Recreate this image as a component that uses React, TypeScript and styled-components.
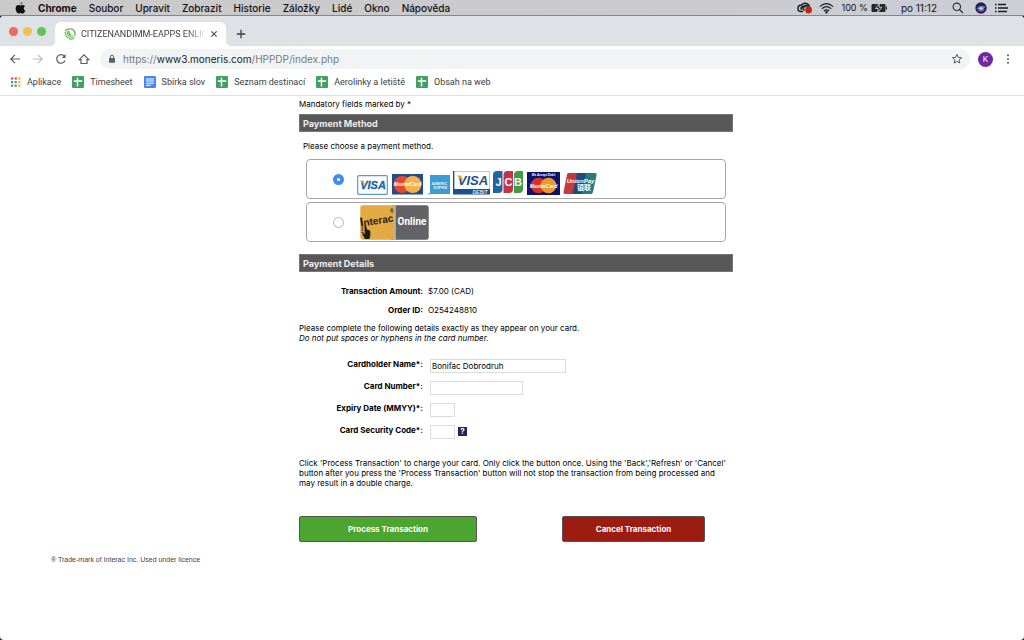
import React from "react";
import styled, { createGlobalStyle } from "styled-components";

const ui = `Inter, Roboto, sans-serif`;
const narrow = `Roboto, "Liberation Sans", sans-serif`;
const arial = `"Liberation Sans", Arial, sans-serif`;

const GlobalStyle = createGlobalStyle`
  *, *::before, *::after { box-sizing: border-box; }
  body { margin: 0; background: #1c2540; color: #000; font-family: ${ui}; }
  button, input { font: inherit; margin: 0; }
`;

const Screen = styled.div`
  display: flex;
  flex-direction: column;
  min-height: 100vh;
`;

/* ---------- system menu bar ---------- */
const MenuBar = styled.header`
  display: flex;
  align-items: center;
  justify-content: space-between;
  height: 16px;
  padding: 0 16px 0 15px;
  background: linear-gradient(90deg, #c9c9ca, #cbcbcd 60%, #cccdd6);
  border-bottom: 1px solid #85868a;
  font: 10px/14px ${ui};
  color: #111;
`;
const Menus = styled.nav`
  display: flex;
  align-items: center;
  gap: 12px;
`;
const MenuItem = styled.span<{ $bold?: boolean }>`
  font-weight: ${(p) => (p.$bold ? 700 : 500)};
  white-space: nowrap;
`;
const Status = styled.div`
  display: flex;
  align-items: center;
`;
const StatusItem = styled.span<{ $gap?: number }>`
  display: flex;
  margin-left: ${(p) => p.$gap ?? 0}px;
  font-size: 9px;
  white-space: nowrap;
`;
const Clock = styled(StatusItem)`
  font-size: 10px;
`;

/* ---------- browser window ---------- */
const Window = styled.div`
  display: flex;
  flex-direction: column;
  flex: 1;
  overflow: hidden;
  border-radius: 4px;
  background: #fff;
`;
const TabStrip = styled.div`
  display: flex;
  align-items: flex-end;
  height: 30px;
  padding-left: 9px;
  background: #dee1e6;
`;
const Lights = styled.div`
  display: flex;
  gap: 5px;
  height: 19px;
`;
const Light = styled.span<{ $color: string }>`
  width: 9px;
  height: 9px;
  border-radius: 50%;
  background: ${(p) => p.$color};
`;
const Tab = styled.div`
  display: flex;
  align-items: center;
  position: relative;
  width: 171px;
  height: 24px;
  margin-left: 9px;
  padding: 0 8px 0 9px;
  border-radius: 6px 6px 0 0;
  background: #fff;
  font: 9px/12px ${narrow};
  color: #3c4043;
  &::before, &::after {
    content: "";
    position: absolute;
    bottom: 0;
    width: 5px;
    height: 5px;
  }
  &::before { left: -5px; background: radial-gradient(circle at 0 0, #dee1e6 5px, #fff 5px); }
  &::after { right: -5px; background: radial-gradient(circle at 100% 0, #dee1e6 5px, #fff 5px); }
`;
const TabTitle = styled.span`
  flex: 1;
  margin-left: 5px;
  white-space: nowrap;
  mask-image: linear-gradient(90deg, #000 82%, transparent 97%);
`;
const IconButton = styled.button`
  display: flex;
  align-items: center;
  justify-content: center;
  padding: 0;
  border: 0;
  background: none;
`;
const NewTab = styled(IconButton)`
  width: 12px;
  height: 24px;
  margin-left: 9px;
`;
const Toolbar = styled.div`
  display: flex;
  align-items: center;
  height: 26px;
  padding: 0 12px 0 9px;
`;
const NavButtons = styled.div`
  display: flex;
  gap: 11px;
`;
const AddressBar = styled.div`
  display: flex;
  align-items: center;
  flex: 1;
  height: 20px;
  margin: 0 8px 0 10px;
  padding: 0 7px 0 8px;
  border-radius: 10px;
  background: #f1f3f4;
  font: 10px/14px ${ui};
`;
const Url = styled.a`
  flex: 1;
  margin-left: 7px;
  color: #777b80;
  text-decoration: none;
  b { font-weight: 400; color: #202124; }
`;
const Avatar = styled.span`
  width: 15px;
  height: 15px;
  margin-right: 11px;
  border-radius: 50%;
  background: #6e2a9d;
  color: #fff;
  font: 8px/15px ${ui};
  text-align: center;
`;
const Bookmarks = styled.nav`
  display: flex;
  align-items: center;
  gap: 11px;
  height: 24px;
  padding: 0 10px 4px;
  border-bottom: 1px solid #dedfe0;
`;
const Bookmark = styled.a`
  display: flex;
  align-items: center;
  gap: 6px;
  font: 9px/12px ${narrow};
  color: #3c4043;
  text-decoration: none;
  white-space: nowrap;
`;

/* ---------- payment page ---------- */
const Page = styled.main`
  flex: 1;
  padding: 3px 0 40px 8px;
  font-size: 8px;
  line-height: 10px;
`;
const Form = styled.form`
  max-width: 434px;
  margin: 0 auto;
`;
const Text = styled.p<{ $top?: number; $inset?: number }>`
  margin: ${(p) => p.$top ?? 0}px 0 0;
  padding-left: ${(p) => p.$inset ?? 0}px;
  white-space: nowrap;
`;
const SectionTitle = styled.h2<{ $top: number }>`
  margin: ${(p) => p.$top}px 0 0;
  padding: 0 3px;
  height: 18px;
  border: 1px solid #777;
  background: #585858;
  color: #eee;
  font-size: 9px;
  line-height: 17px;
`;
const Options = styled.div`
  display: grid;
  gap: 3px;
  margin: 8px 7px 0;
`;
const Option = styled.label`
  display: flex;
  align-items: center;
  height: 40px;
  padding-left: 26px;
  border: 1px solid #a6a6a6;
  border-radius: 4px;
`;
const Radio = styled.input`
  appearance: none;
  width: 11px;
  height: 11px;
  border: 1px solid #b5b5b5;
  border-radius: 50%;
  background: #fff;
  &:checked { border: 4px solid #3f8cf4; }
`;
const Logos = styled.span<{ $left: number; $top?: number }>`
  display: flex;
  align-items: flex-end;
  margin-left: ${(p) => p.$left}px;
  padding-top: ${(p) => p.$top ?? 0}px;
`;
const Summary = styled.dl`
  display: grid;
  grid-template-columns: 124px 1fr;
  gap: 9px 5px;
  margin: 14px 0 0;
  dt { text-align: right; font-weight: 700; white-space: nowrap; }
  dd { margin: 0; }
`;
const Fields = styled.div`
  display: grid;
  gap: 7px;
  margin-top: 15px;
`;
const Field = styled.div`
  display: grid;
  grid-template-columns: 124px auto auto 1fr;
  align-items: end;
  height: 15px;
  label {
    align-self: start;
    padding-top: 1px;
    text-align: right;
    font-weight: 700;
    white-space: nowrap;
  }
`;
const TextBox = styled.input<{ $width: number }>`
  width: ${(p) => p.$width}px;
  height: 14px;
  margin-left: 7px;
  padding: 0 1px;
  border: 1px solid #dcdcdc;
  font: 8px/12px ${ui};
`;
const Help = styled(IconButton)`
  width: 9px;
  height: 9px;
  margin: 0 0 3px 3px;
  background: #24225a;
  color: #fff;
  font-weight: 700;
  line-height: 9px;
`;
const Actions = styled.div`
  display: flex;
  justify-content: space-between;
  margin-top: 28px;
  padding-right: 28px;
`;
const Action = styled.button<{ $color: string; $width: number }>`
  width: ${(p) => p.$width}px;
  height: 26px;
  padding: 0;
  border: 1px solid #555;
  border-radius: 2px;
  background: ${(p) => p.$color};
  color: #fff;
  font-weight: 700;
`;
const Trademark = styled.p`
  margin: 13px 0 0 43px;
  font-family: ${arial};
  font-size: 7px;
  color: #444;
`;

const Sheet = () => (
  <svg width="12" height="12" viewBox="0 0 12 12">
    <rect width="12" height="12" rx="1" fill="#43a063" />
    <path d="M5.5 1.800v8.600M1.800 5h8.400" stroke="#fff" strokeWidth="1.500" />
  </svg>
);
const Doc = () => (
  <svg width="12" height="12" viewBox="0 0 12 12">
    <rect width="12" height="12" rx="1" fill="#4a86ee" />
    <path d="M2 3h8M2 5h8M2 7.200h8M2 9.300h5" stroke="#fff" strokeWidth="1" />
  </svg>
);
const appColors = ["#e8453c", "#e8453c", "#f3b32a", "#3ba55c", "#4688f1", "#f3b32a", "#3ba55c", "#3ba55c", "#f3b32a"];
const Apps = () => (
  <svg width="11" height="12" viewBox="0 0 11 12">
    {appColors.map((c, i) => (
      <rect key={i} x={1 + (i % 3) * 3.6} y={1.4 + Math.floor(i / 3) * 3.6} width="2.2" height="2.2" fill={c} />
    ))}
  </svg>
);

const bold = { fontFamily: "Liberation Sans, Arial, sans-serif", fontWeight: 700 };

const Cards = () => (
  <>
    <svg width="31" height="20" viewBox="0 0 31 20">
      <rect x=".7" y=".7" width="29.600" height="18.600" rx="1" fill="#fff" stroke="#5b9ac9" strokeWidth="1.200" />
      <text x="16" y="14" textAnchor="middle" fontSize="11" fontStyle="italic" fill="#23659f" stroke="#23659f" strokeWidth=".3" {...bold}>VISA</text>
      <path d="M3 5.800h3.400l1.600 4z" fill="#eda62c" />
    </svg>
    <svg width="39" height="21" viewBox="0 0 39 21">
      <rect x="4" width="31" height="20.500" fill="#1f4d90" />
      <circle cx="14.300" cy="10.300" r="8.600" fill="#e4482e" />
      <circle cx="24.800" cy="10.300" r="8.600" fill="#f3b24a" />
      <text x="19.500" y="12.300" textAnchor="middle" fontSize="5" fontStyle="italic" fill="#fff" {...bold}>MasterCard</text>
    </svg>
    <svg width="26" height="20" viewBox="0 0 26 20">
      <rect x="3" y="0" width="20" height="19" fill="#3d9bd0" />
      <g fontSize="4" fill="#e4f4fc" {...bold}>
        <text x="4.500" y="9.500">AMERIC</text>
        <text x="6.500" y="13.500">EXPRE</text>
      </g>
      <path d="M1 18.800h3" stroke="#3d9bd0" strokeWidth="1" />
    </svg>
    <svg width="37" height="24" viewBox="0 0 37 24">
      <rect x=".5" y=".5" width="36" height="22" fill="#fff" stroke="#b9cbe0" />
      <path d="M0 0h1.400v18H37v5.500H0z" fill="#1c4f92" />
      <text x="20" y="14" textAnchor="middle" fontSize="13" fontStyle="italic" fill="#1c4f92" {...bold}>VISA</text>
      <path d="M3.500 4.500h4.500l2 5z" fill="#eda62c" />
      <text x="27" y="22.600" textAnchor="middle" fontSize="5" fontStyle="italic" fill="#dfe8f4" {...bold}>DEBIT</text>
    </svg>
    <svg width="37" height="24" viewBox="0 0 37 24">
      <path d="M7 0h5.500v18q0 4-4 4H3V4q0-4 4-4z" fill="#2263a4" />
      <path d="M17.500 0H23v18q0 4-4 4h-5.500V4q0-4 4-4z" fill="#c5324a" />
      <path d="M28 0h5v18q0 4-4 4h-5V4q0-4 4-4z" fill="#3f9c45" />
      <g fontSize="11" fill="#fff" textAnchor="middle" {...bold}>
        <text x="8.600" y="15">J</text>
        <text x="18.400" y="15">C</text>
        <text x="28" y="15">B</text>
      </g>
    </svg>
    <svg width="33" height="23" viewBox="0 0 33 23">
      <rect width="33" height="23" fill="#0e1370" />
      <circle cx="11.500" cy="13.500" r="7.800" fill="#d5322b" />
      <circle cx="21.500" cy="13.500" r="7.800" fill="#f09a2a" />
      <text x="16.500" y="4.200" textAnchor="middle" fontSize="3" fontStyle="italic" fill="#fff" {...bold}>We Accept Debit</text>
      <text x="16.500" y="15.500" textAnchor="middle" fontSize="5" fontStyle="italic" fill="#fff" {...bold}>MasterCard</text>
    </svg>
    <svg width="37" height="23" viewBox="0 0 37 23">
      <path d="M8 1h10l-4.500 21H5q-2 0-1.500-2L7 2.500Q7.300 1 8 1z" fill="#c53a41" />
      <path d="M17 1h10l-4.500 21H12.500z" fill="#1f4c80" />
      <path d="M26 1h9q2 0 1.600 2L33 20q-.5 2-2 2h-9.500z" fill="#277b80" />
      <text x="20.500" y="11" textAnchor="middle" fontSize="6" fontStyle="italic" fill="#fff" {...bold}>UnionPay</text>
      <text x="24" y="18" textAnchor="middle" fontSize="7" fontWeight="700" fill="#fff" fontFamily="Noto Sans CJK SC, sans-serif">银联</text>
    </svg>
  </>
);

const Interac = () => (
  <svg width="69" height="35" viewBox="0 0 69 35">
    <rect x="30" y=".3" width="38.700" height="34.400" rx="2.500" fill="#626366" />
    <path d="M3 .3h31.500v34.400H3q-2.700 0-2.700-2.700V3Q.3.300 3 .3z" fill="#e2aa40" />
    <path d="M35 .3v34.400" stroke="#e9e4d8" strokeWidth="1" />
    <text transform="rotate(-9 2 22)" x=".5" y="21.500" fontSize="10" fill="#1d1a16" {...bold}>
      <tspan fontSize="13">I</tspan>nterac
    </text>
    <path d="M4.500 20.500q1.200-1 1.700 1l.8 3 2.500.7q1 .5.9 2.300l-.2 3.500-.8 3H5l-2.500-4.500q-.4-1.600 1-1.200l1.300 1z" fill="#1d1a16" />
    <path d="M1.500 23h2M1.500 25.200h2M1.500 27.400h2" stroke="#1d1a16" strokeWidth="1" />
    <text x="30" y="7.500" fontSize="5" fill="#1d1a16" {...bold}>®</text>
    <text x="52" y="19.500" textAnchor="middle" fontSize="10" fill="#fff" fontFamily="Roboto, sans-serif" fontWeight="700">Online</text>
  </svg>
);

const menus = ["Soubor", "Upravit", "Zobrazit", "Historie", "Záložky", "Lidé", "Okno", "Nápověda"];
const bookmarks = [
  { name: "Aplikace", icon: <Apps /> },
  { name: "Timesheet", icon: <Sheet /> },
  { name: "Sbírka slov", icon: <Doc /> },
  { name: "Seznam destinací", icon: <Sheet /> },
  { name: "Aerolinky a letiště", icon: <Sheet /> },
  { name: "Obsah na web", icon: <Sheet /> },
];
const fields = [
  { id: "name", label: "Cardholder Name*:", width: 136, value: "Bonifac Dobrodruh" },
  { id: "number", label: "Card Number*:", width: 93, value: "" },
  { id: "expiry", label: "Expiry Date (MMYY)*:", width: 25, value: "" },
  { id: "code", label: "Card Security Code*:", width: 25, value: "", help: true },
];

export default function App() {
  return (
    <Screen>
      <GlobalStyle />
      <MenuBar>
        <Menus>
          <svg width="11" height="12" viewBox="0 0 11 12">
            <path d="M7.300 0Q7.400 1.900 5.400 2.700 5.300.9 7.300 0zM5.500 3.500C6.200 3.500 6.800 3 7.800 3q1.500 0 2.200 1.200Q8.600 5 8.700 6.600 8.900 8.200 10.300 8.700 9.200 11.600 7.700 11.600 6.800 11.600 5.600 11.100 4.700 11.500 3.800 11.600 2.100 11.600 1 8.700 0 5.900 1.200 4.200 2 3 3.500 3q.9 0 2 .5z" fill="#111" />
          </svg>
          <MenuItem $bold>Chrome</MenuItem>
          {menus.map((m) => <MenuItem key={m}>{m}</MenuItem>)}
        </Menus>
        <Status>
          <svg width="16" height="12" viewBox="0 0 16 12" fill="none" stroke="#1b1b1b">
            <path d="M6 9.300Q1 10.500 1 6.400 1 3 4.500 3 6.500.8 9.500 1.500q2.600.8 3 3.500M8.500 5Q6.500 3.800 5 4.800 3.200 6 4.600 7.800M11 4.500Q9 2.500 7 4.200 5 6.500 7.500 8.500" strokeWidth="1.500" />
            <circle cx="11.600" cy="8" r="3.400" fill="#c52310" stroke="none" />
          </svg>
          <StatusItem $gap={6}>
            <svg width="15" height="12" viewBox="0 0 15 12" fill="none" stroke="#1b1b1b" strokeWidth="1.100">
              <path d="M.8 4.600Q7.500-1.500 14.200 4.600M2.800 6.800Q7.500 2.500 12.200 6.800M4.900 9Q7.500 6.600 10.100 9" />
              <circle cx="7.500" cy="10.300" r=".7" fill="#1b1b1b" />
            </svg>
          </StatusItem>
          <StatusItem $gap={7}>100 %</StatusItem>
          <StatusItem $gap={3}>
            <svg width="17" height="10" viewBox="0 0 17 10">
              <rect x=".5" y="1" width="14" height="8" rx="1" fill="#26272a" />
              <path d="M15.500 3.500v3" stroke="#26272a" />
              <path d="M8.500 0 4.500 5.500h2.800L6.500 10l4.300-5.700H8z" fill="#26272a" stroke="#cfcfd4" strokeWidth=".9" />
            </svg>
          </StatusItem>
          <Clock $gap={13}>po 11:12</Clock>
          <StatusItem $gap={15}>
            <svg width="12" height="12" viewBox="0 0 12 12" fill="none" stroke="#26272a" strokeWidth="1.100">
              <circle cx="4.800" cy="4.800" r="3.700" />
              <path d="m7.500 7.500 3.500 3.500" />
            </svg>
          </StatusItem>
          <StatusItem $gap={11}>
            <svg width="12" height="12" viewBox="0 0 12 12">
              <circle cx="6" cy="6" r="5.700" fill="#23204a" />
              <path d="M1.500 7Q4 2 10.500 4.500 9 9 1.500 7z" fill="#3a8fd0" />
              <path d="M3 8.500Q6 3 9.500 8 7 10.500 3 8.500z" fill="#b05bd0" />
              <path d="M4 6.500q2-2 4-.5-1 2-4 .5z" fill="#e6f6ff" />
            </svg>
          </StatusItem>
          <StatusItem $gap={8}>
            <svg width="13" height="10" viewBox="0 0 13 10" stroke="#1b1b1b" strokeWidth="1.400">
              <path d="M0 1.500h1.500M3 1.500h8M0 5h1.500M3 5h10M0 8.500h1.500M3 8.500h9" />
            </svg>
          </StatusItem>
        </Status>
      </MenuBar>

      <Window>
        <TabStrip>
          <Lights>
            <Light $color="#ed6a5e" />
            <Light $color="#f5bf4f" />
            <Light $color="#61c554" />
          </Lights>
          <Tab>
            <svg width="12" height="12" viewBox="0 0 12 12" fill="none" stroke="#5cb848" strokeWidth="1.200">
              <path d="M1 2.500Q6-.5 9.500 2 12 5 10.500 8M1 4q.5 5 5 7Q9 11.500 10.500 9.500M3 3q.3 4 3.500 5.800Q8 9.500 9 8M5 2.800Q4.500 6 7.500 7" />
            </svg>
            <TabTitle>CITIZENANDIMM-EAPPS ENLIG</TabTitle>
            <IconButton type="button" aria-label="Close tab">
              <svg width="8" height="8" viewBox="0 0 8 8" stroke="#4a4d51" strokeWidth="1.100">
                <path d="m1.300 1.300 5.400 5.400M6.700 1.300 1.300 6.700" />
              </svg>
            </IconButton>
          </Tab>
          <NewTab type="button" aria-label="New tab">
            <svg width="10" height="10" viewBox="0 0 10 10" stroke="#3c4043" strokeWidth="1.300">
              <path d="M5 .8v8.400M.8 5h8.400" />
            </svg>
          </NewTab>
        </TabStrip>
        <Toolbar>
          <NavButtons>
            <IconButton type="button" aria-label="Back">
              <svg width="12" height="12" viewBox="0 0 12 12" fill="none" stroke="#5a5e63" strokeWidth="1.200">
                <path d="M11 6H2M6 1.800 1.800 6 6 10.200" />
              </svg>
            </IconButton>
            <IconButton type="button" aria-label="Forward">
              <svg width="12" height="12" viewBox="0 0 12 12" fill="none" stroke="#b9bbbe" strokeWidth="1.200">
                <path d="M1 6h9M6 1.800 10.200 6 6 10.200" />
              </svg>
            </IconButton>
            <IconButton type="button" aria-label="Reload">
              <svg width="12" height="12" viewBox="0 0 12 12" fill="none" stroke="#5a5e63" strokeWidth="1.200">
                <path d="M10 7.500A4.300 4.300 0 1 1 9.300 3.200" />
                <path d="M10.600 1v4H6.800z" fill="#5a5e63" stroke="none" />
              </svg>
            </IconButton>
            <IconButton type="button" aria-label="Home">
              <svg width="12" height="12" viewBox="0 0 12 12" fill="none" stroke="#5a5e63" strokeWidth="1.200">
                <path d="M1.300 6.600 6 1.900l4.700 4.700H9v3.900H3V6.600z" />
              </svg>
            </IconButton>
          </NavButtons>
          <AddressBar>
            <svg width="8" height="10" viewBox="0 0 8 10">
              <rect x="1" y="4" width="6" height="4.800" rx=".6" fill="#5a5e63" />
              <path d="M2.400 4V2.800a1.600 1.600 0 0 1 3.200 0V4" fill="none" stroke="#5a5e63" />
            </svg>
            <Url href="#">https://<b>www3.moneris.com</b>/HPPDP/index.php</Url>
            <IconButton type="button" aria-label="Bookmark this page">
              <svg width="12" height="12" viewBox="0 0 12 12" fill="none" stroke="#5a5e63" strokeWidth="1">
                <path d="m6 1.400 1.300 3 3.300.3L8.100 6.900l.8 3.200L6 8.400l-2.900 1.700.8-3.200L1.400 4.700l3.300-.3z" />
              </svg>
            </IconButton>
          </AddressBar>
          <Avatar>K</Avatar>
          <IconButton type="button" aria-label="Browser menu">
            <svg width="8" height="12" viewBox="0 0 8 12" fill="#5a5e63">
              <circle cx="4" cy="2.300" r="1" />
              <circle cx="4" cy="6" r="1" />
              <circle cx="4" cy="9.700" r="1" />
            </svg>
          </IconButton>
        </Toolbar>
        <Bookmarks>
          {bookmarks.map((b) => (
            <Bookmark key={b.name} href="#">{b.icon}{b.name}</Bookmark>
          ))}
        </Bookmarks>

        <Page>
          <Form onSubmit={(e) => e.preventDefault()}>
            <Text>Mandatory fields marked by *</Text>
            <SectionTitle $top={5}>Payment Method</SectionTitle>
            <Text $top={9} $inset={4}>Please choose a payment method.</Text>
            <Options>
              <Option>
                <Radio type="radio" name="method" aria-label="Credit or debit card" defaultChecked />
                <Logos $left={13} $top={8}><Cards /></Logos>
              </Option>
              <Option>
                <Radio type="radio" name="method" aria-label="Interac Online" />
                <Logos $left={16}><Interac /></Logos>
              </Option>
            </Options>
            <SectionTitle $top={12}>Payment Details</SectionTitle>
            <Summary>
              <dt>Transaction Amount:</dt>
              <dd>$7.00 (CAD)</dd>
              <dt>Order ID:</dt>
              <dd>O254248810</dd>
            </Summary>
            <Text $top={8}>
              Please complete the following details exactly as they appear on your card.
              <br />
              <i>Do not put spaces or hyphens in the card number.</i>
            </Text>
            <Fields>
              {fields.map((f) => (
                <Field key={f.id}>
                  <label htmlFor={f.id}>{f.label}</label>
                  <TextBox id={f.id} $width={f.width} defaultValue={f.value} />
                  {f.help && <Help type="button">?</Help>}
                </Field>
              ))}
            </Fields>
            <Text $top={19}>
              Click 'Process Transaction' to charge your card. Only click the button once. Using the 'Back','Refresh' or 'Cancel'
              <br />
              button after you press the 'Process Transaction' button will not stop the transaction from being processed and
              <br />
              may result in a double charge.
            </Text>
            <Actions>
              <Action type="submit" $color="#4ca530" $width={178}>Process Transaction</Action>
              <Action type="button" $color="#9c1c12" $width={143}>Cancel Transaction</Action>
            </Actions>
          </Form>
          <Trademark>® Trade-mark of Interac Inc. Used under licence</Trademark>
        </Page>
      </Window>
    </Screen>
  );
}
